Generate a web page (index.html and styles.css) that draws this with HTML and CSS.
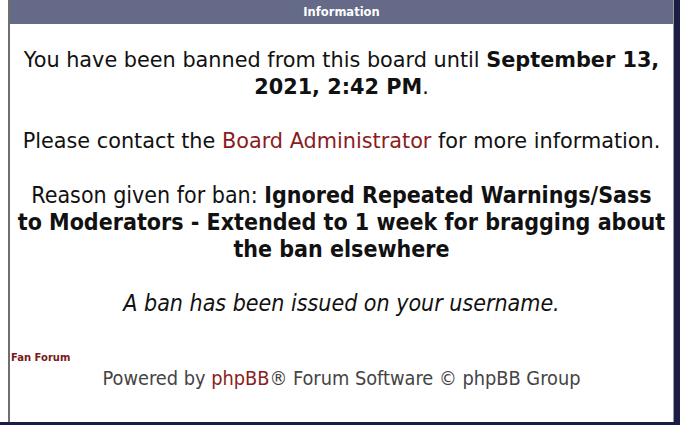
FILE: index.html
```html
<!DOCTYPE html>
<html>
<head>
<meta charset="utf-8"/>
<title>Information</title>
<link rel="stylesheet" href="styles.css">
</head>
<body>
<div class="page">
<div class="gutter"></div>

<div class="panel">
<h2 class="panel-head">Information</h2>

<div class="panel-body">
<p class="msg">You have been banned from this board until <strong>September 13, 2021, 2:42 PM</strong>.</p>

<p class="msg">Please contact the <a href="#">Board Administrator</a> for more information.</p>

<p class="msg narrow">Reason given for ban: <strong>Ignored Repeated Warnings/Sass<br>to Moderators - Extended to 1 week for bragging about the ban elsewhere</strong></p>

<p class="msg narrow"><em>A ban has been issued on your username.</em></p>
</div>

<div class="foot">
<a class="site" href="#">Fan Forum</a>
<p class="copy">Powered by <a href="#">phpBB</a>&reg; Forum Software &copy; phpBB Group</p>
</div>
</div>

<div class="side"></div>
</div>
<div class="bottom"></div>
</body>
</html>
```

FILE: styles.css
```css
html, body {
   margin: 0;
   padding: 0;
   background-color: white;
   font-family: "DejaVu Sans", Verdana, sans-serif;
   color: #111;
}

.page {
   display: flex;
   height: 422px;
}

.gutter {
   width: 8px;
   background-color: white;
}

.panel {
   flex: 1;
   display: flex;
   flex-direction: column;
   border-left: 2px solid #6f6f6f;
   border-right: 1px solid #9a9a9a;
   background-color: white;
}

.side {
   width: 6px;
   background-color: #1c1d47;
}

.bottom {
   height: 3px;
   background-color: #1c1d47;
}

.panel-head {
   margin: 0;
   height: 24px;
   line-height: 25px;
   background-color: #646a87;
   color: white;
   font-size: 11.5px;
   font-weight: bold;
   text-align: center;
}

.panel-body {
   padding: 23px 6px 0;
   text-align: center;
}

.msg {
   margin: 0 0 27px;
   font-size: 20.8px;
   line-height: 27px;
}

.narrow {
   font-family: "DejaVu Sans Condensed", "DejaVu Sans", sans-serif;
   font-size: 23px;
}

a {
   color: #8a1c1c;
   text-decoration: none;
}

.foot {
   padding-top: 8px;
}

.site {
   display: block;
   margin-left: 1px;
   font-size: 10px;
   font-weight: bold;
   color: #7a1a1a;
}

.copy {
   margin: 4px 0 0;
   text-align: center;
   font-family: "DejaVu Sans Condensed", "DejaVu Sans", sans-serif;
   font-size: 19.8px;
   color: #444;
}
```
